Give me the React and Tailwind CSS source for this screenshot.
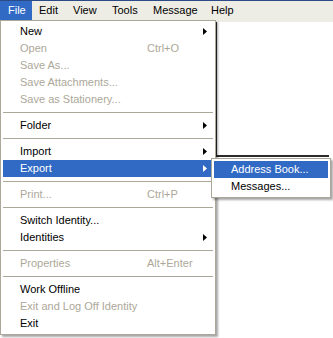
import React from "react";

const Arrow = ({ white }) => (
  <svg width="4" height="7" viewBox="0 0 4 7" className="block">
    <path d="M0 0 L4 3.5 L0 7 Z" fill={white ? "#fff" : "#000"} />
  </svg>
);

const items = [
  { label: "New", arrow: true },
  { label: "Open", sc: "Ctrl+O", dis: true },
  { label: "Save As...", dis: true },
  { label: "Save Attachments...", dis: true },
  { label: "Save as Stationery...", dis: true },
  { sep: true },
  { label: "Folder", arrow: true },
  { sep: true },
  { label: "Import", arrow: true },
  { label: "Export", arrow: true, hi: true },
  { sep: true },
  { label: "Print...", sc: "Ctrl+P", dis: true },
  { sep: true },
  { label: "Switch Identity..." },
  { label: "Identities", arrow: true },
  { sep: true },
  { label: "Properties", sc: "Alt+Enter", dis: true },
  { sep: true },
  { label: "Work Offline" },
  { label: "Exit and Log Off Identity", dis: true },
  { label: "Exit" },
];

function Item({ it }) {
  if (it.sep)
    return (
      <div className="h-[9px] flex items-center">
        <div className="h-px w-full bg-[#aca899]" />
      </div>
    );
  const color = it.hi ? "text-white bg-[#316ac5]" : it.dis ? "text-[#aca899]" : "text-black";
  return (
    <div className={`h-[17px] flex items-center relative ${color}`}>
      <span className="pl-[17px] w-[144px] shrink-0 whitespace-nowrap">{it.label}</span>
      {it.sc && <span className="whitespace-nowrap">{it.sc}</span>}
      {it.arrow && (
        <span className="absolute right-[6px] top-[5px]">
          <Arrow white={it.hi} />
        </span>
      )}
    </div>
  );
}

export default function App() {
  const menus = [
    { t: "File", w: "w-[32px] pl-[8px]", hi: true },
    { t: "Edit", w: "w-[34px] pl-[7px]" },
    { t: "View", w: "w-[39px] pl-[7px]" },
    { t: "Tools", w: "w-[41px] pl-[7px]" },
    { t: "Message", w: "w-[58px] pl-[7px]" },
    { t: "Help", w: "w-[40px] pl-[7px]" },
  ];
  return (
    <div
      className="relative w-[333px] h-[338px] bg-white overflow-hidden text-[11px] leading-none"
      style={{ fontFamily: '"Liberation Sans", Arial, sans-serif' }}
    >
      <div className="h-px bg-[#2c4a86]" />
      <div className="h-[21px] bg-[#eeede5] flex items-start">
        {menus.map((m) => (
          <div
            key={m.t}
            className={`${m.w} h-[19px] flex items-center ${m.hi ? "bg-[#316ac5] text-white" : "text-black"}`}
          >
            {m.t}
          </div>
        ))}
      </div>
      <div className="ml-[215px] w-[114px] h-[135px] border-l-2 border-b-2 border-[#2a2a2a] bg-white" />

      {/* File menu */}
      <div className="absolute left-0 top-[20px] w-[216px] bg-white border border-[#aca899] p-[2px] shadow-[2px_2px_2px_rgba(0,0,0,0.35)]">
        {items.map((it, i) => (
          <Item key={i} it={it} />
        ))}
      </div>

      {/* Export submenu */}
      <div className="absolute left-[211px] top-[158px] w-[120px] bg-white border border-[#aca899] p-[2px] shadow-[2px_2px_2px_rgba(0,0,0,0.35)]">
        <div className="h-[17px] flex items-center pl-[17px] bg-[#316ac5] text-white whitespace-nowrap">
          Address Book...
        </div>
        <div className="h-[17px] flex items-center pl-[17px] text-black whitespace-nowrap">
          Messages...
        </div>
      </div>
    </div>
  );
}
